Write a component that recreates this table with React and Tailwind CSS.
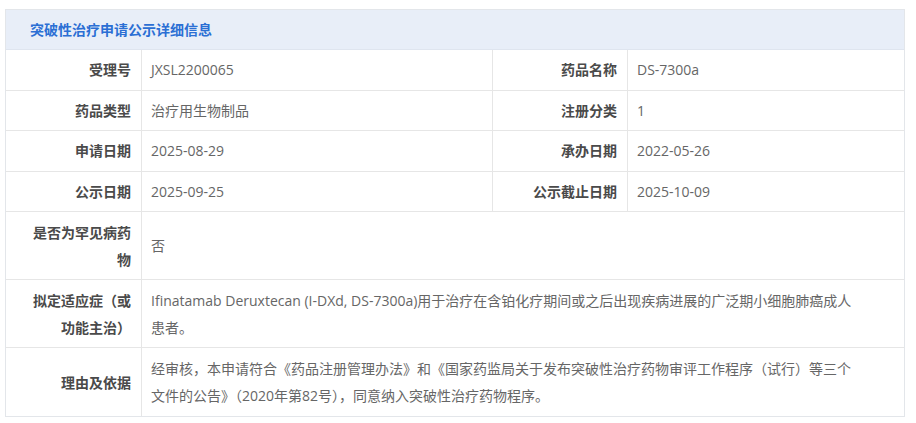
const rows = [
  [
    { label: '受理号', value: 'JXSL2200065' },
    { label: '药品名称', value: 'DS-7300a' },
  ],
  [
    { label: '药品类型', value: '治疗用生物制品' },
    { label: '注册分类', value: '1' },
  ],
  [
    { label: '申请日期', value: '2025-08-29' },
    { label: '承办日期', value: '2022-05-26' },
  ],
  [
    { label: '公示日期', value: '2025-09-25' },
    { label: '公示截止日期', value: '2025-10-09' },
  ],
];

const wide = [
  { label: '是否为罕见病药物', value: ['否'] },
  {
    label: '拟定适应症（或功能主治）',
    value: [
      'Ifinatamab Deruxtecan (I-DXd, DS-7300a)用于治疗在含铂化疗期间或之后出现疾病进展的广泛期小细胞肺癌成人',
      '患者。',
    ],
  },
  {
    label: '理由及依据',
    value: [
      '经审核，本申请符合《药品注册管理办法》和《国家药监局关于发布突破性治疗药物审评工作程序（试行）等三个',
      '文件的公告》（2020年第82号），同意纳入突破性治疗药物程序。',
    ],
  },
];

const Label = ({ children, className = '' }) => (
  <div className={`flex items-center justify-end text-right border-r border-[#e6e6e6] pl-[20px] pr-[10px] font-bold text-[#4a4a4a] ${className}`}>
    <span>{children}</span>
  </div>
);

const Value = ({ children, className = '' }) => (
  <div className={`flex items-center pl-[9px] text-[#666] ${className}`}>
    <div>{children}</div>
  </div>
);

export default function App() {
  return (
    <div className="w-[916px] h-[423px] bg-white pt-[9px] pl-[5px] font-['Open_Sans','Noto_Sans_CJK_SC',sans-serif] text-[14px]">
      <div className="w-[900px] border border-[#e3e6ea]">
        {/* Header */}
        <div className="h-[40px] flex items-center bg-[#e8eef8] border-b border-[#dfe5ef] pl-[24px] font-bold text-[#2b6fd4]">
          突破性治疗申请公示详细信息
        </div>

        {/* Paired rows */}
        {rows.map((row, i) => (
          <div key={i} className="grid grid-cols-[136px_351px_135px_1fr] h-[40.5px] border-b border-[#e6e6e6]">
            <Label>{row[0].label}</Label>
            <Value className="border-r border-[#e6e6e6] pr-[14px]">{row[0].value}</Value>
            <Label>{row[1].label}</Label>
            <Value className="pr-[14px]">{row[1].value}</Value>
          </div>
        ))}

        {/* Full-width rows */}
        {wide.map((item, i) => (
          <div
            key={i}
            className={`grid grid-cols-[136px_1fr] min-h-[68px] leading-[27px] ${i < wide.length - 1 ? 'border-b border-[#e6e6e6]' : ''}`}
          >
            <Label className="py-[6.5px]">{item.label}</Label>
            <Value className="py-[6.5px] pr-[10px]">
              {item.value.map((line, j) => (
                <div key={j}>{line}</div>
              ))}
            </Value>
          </div>
        ))}
      </div>
    </div>
  );
}
